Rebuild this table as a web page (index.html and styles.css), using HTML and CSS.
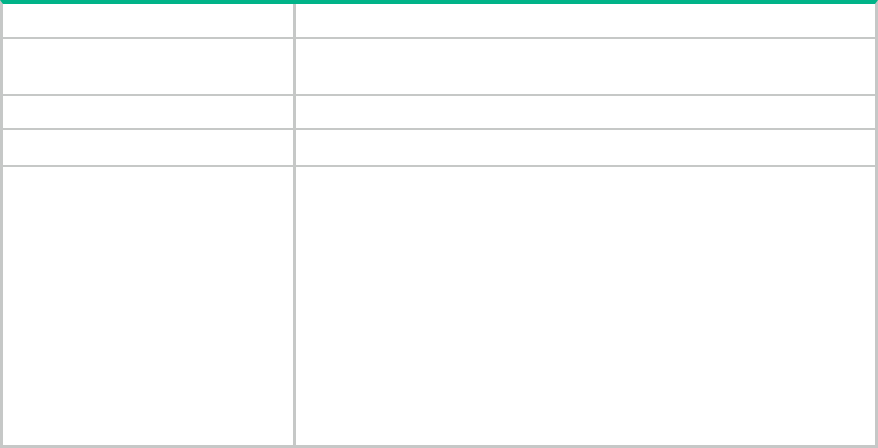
FILE: index.html
```html
<!DOCTYPE html>
<html lang="en">
<head>
<meta charset="utf-8">
<title>Table</title>
<link rel="stylesheet" href="styles.css">
</head>
<body>
<div class="table">
  <div class="cell"></div><div class="cell"></div>
  <div class="cell"></div><div class="cell"></div>
  <div class="cell"></div><div class="cell"></div>
  <div class="cell"></div><div class="cell"></div>
  <div class="cell"></div><div class="cell"></div>
</div>
</body>
</html>
```
FILE: styles.css
```css
html, body {
  margin: 0;
  padding: 0;
  background: #ffffff;
  font-family: "Liberation Sans", Arial, sans-serif;
}
.table {
  width: 878px;
  height: 448px;
  box-sizing: border-box;
  border-top: 4px solid #00b388;
  border-left: 3px solid #c6c8c7;
  border-right: 3px solid #c6c8c7;
  border-bottom: 3px solid #c6c8c7;
  background: #c6c8c7;
  display: grid;
  grid-template-columns: 290px 1fr;
  grid-template-rows: 33px 55px 32px 35px 1fr;
  column-gap: 3px;
  row-gap: 2px;
}
.cell {
  background: #ffffff;
}
```
